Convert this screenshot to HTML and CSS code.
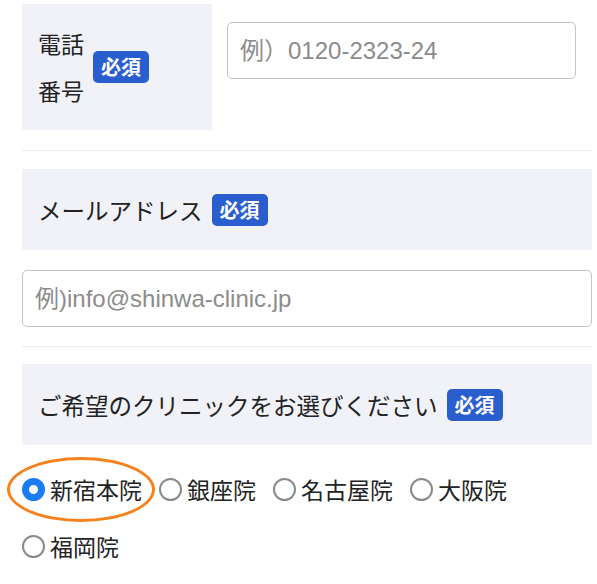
FILE: index.html
```html
<!DOCTYPE html>
<html lang="ja">
<head>
    <meta charset="utf-8">
    <title>お問い合わせ</title>
    <link rel="stylesheet" href="styles.css">
</head>
<body>
    <div class="form">
        <div class="row-tel">
            <div class="label-cell">
                <span class="label-text">電話<br>番号</span>
                <span class="badge">必須</span>
            </div>
            <div class="field-cell">
                <input type="tel" class="text-input" placeholder="例）0120-2323-24">
            </div>
        </div>
        <div class="divider first"></div>

        <div class="label-bar">メールアドレス <span class="badge">必須</span></div>
        <input type="email" class="text-input wide" placeholder="例)info@shinwa-clinic.jp">
        <div class="divider"></div>

        <div class="label-bar">ご希望のクリニックをお選びください <span class="badge">必須</span></div>
        <div class="radio-group">
            <label class="radio marked"><input type="radio" name="clinic" checked>新宿本院</label>
            <label class="radio"><input type="radio" name="clinic">銀座院</label>
            <label class="radio"><input type="radio" name="clinic">名古屋院</label>
            <label class="radio"><input type="radio" name="clinic">大阪院</label>
            <label class="radio"><input type="radio" name="clinic">福岡院</label>
        </div>
    </div>
</body>
</html>
```

FILE: styles.css
```css
body {
    margin: 0;
    font-family: "Noto Sans CJK JP", "Noto Sans", sans-serif;
    color: #222;
    background: #fff;
}

.form {
    padding: 4px 5px 0 22px;
}

.row-tel {
    display: flex;
}

.label-cell {
    width: 190px;
    box-sizing: border-box;
    padding: 16px 0 16px 16px;
    background: #f1f2f8;
    display: flex;
    align-items: center;
    gap: 9px;
}
.label-text {
    font-size: 23px;
    line-height: 47px;
}

.field-cell {
    flex: 1;
    padding: 18px 16px 0 15px;
}

.badge {
    display: inline-block;
    background: #2a5ecf;
    color: #fff;
    font-size: 20px;
    font-weight: bold;
    line-height: 32px;
    padding: 0 8px;
    border-radius: 5px;
    vertical-align: middle;
}

.text-input {
    display: block;
    width: 100%;
    box-sizing: border-box;
    height: 57px;
    border: 1.5px solid #c4c4c4;
    border-radius: 5px;
    padding: 0 12px;
    font-family: "Liberation Sans", "Noto Sans CJK JP", sans-serif;
    font-size: 24px;
    color: #333;
    outline: none;
}
.text-input::placeholder {
    color: #8c8c8c;
}
.text-input.wide {
    margin-top: 20px;
}

.divider {
    height: 1px;
    background: #ebebeb;
    margin: 19px 0 17px;
}
.divider.first {
    margin: 20px 0 18px;
}

.label-bar {
    background: #f1f2f8;
    height: 81px;
    padding-left: 16px;
    display: flex;
    align-items: center;
    font-size: 23.5px;
    gap: 9px;
}

.radio-group {
    display: flex;
    flex-wrap: wrap;
    column-gap: 17px;
    row-gap: 25px;
    margin-top: 28px;
}

.radio {
    position: relative;
    display: flex;
    align-items: center;
    gap: 5px;
    font-size: 23px;
    line-height: 32px;
}
.radio input {
    appearance: none;
    margin: 0;
    width: 23px;
    height: 23px;
    border: 2px solid #8a8a8a;
    border-radius: 50%;
    box-sizing: border-box;
}
.radio input:checked {
    border: 7px solid #1a7cf0;
}

/* annotation circle around the chosen clinic */
.radio.marked::after {
    content: "";
    position: absolute;
    left: -15px;
    top: -16px;
    width: 148px;
    height: 65px;
    box-sizing: border-box;
    border: 3px solid #f5821f;
    border-radius: 50%;
}
```
